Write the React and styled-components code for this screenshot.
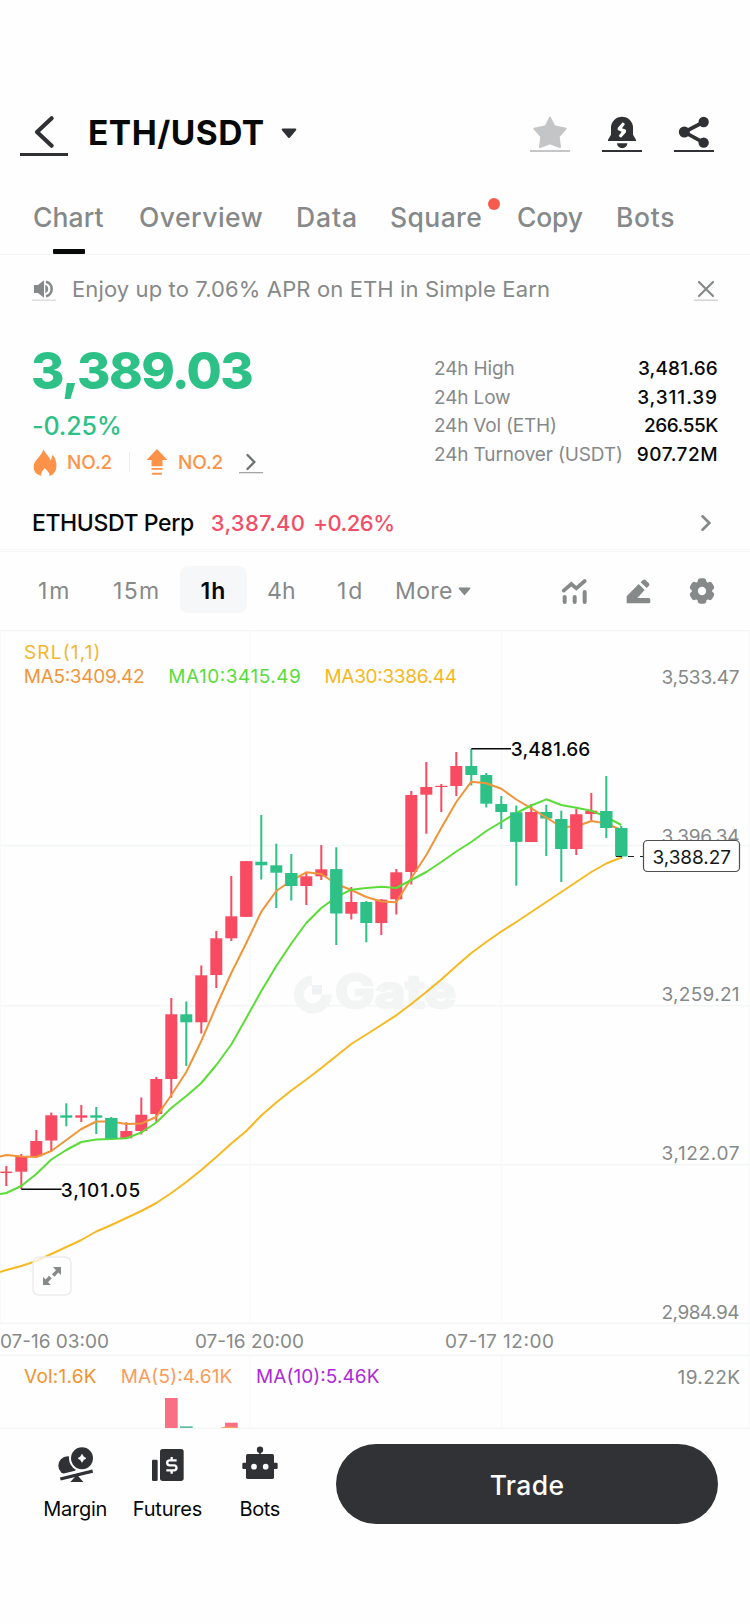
import React from "react";
import styled, { createGlobalStyle } from "styled-components";

const GlobalStyle = createGlobalStyle`
  * { box-sizing: border-box; }
  body { margin: 0; background: #fefefe; }
`;

const GREY = "#868989";
const DARK = "#2f3134";
const RED = "#f84b61";
const GREEN = "#2dc188";
const ORANGE = "#fd9248";

const Screen = styled.main`
  width: 750px;
  height: 1624px;
  padding-top: 88px;
  overflow: hidden;
  background: #fefefe;
  color: #070808;
  font-family: Inter, "Liberation Sans", sans-serif;
`;

const Text = styled.span`
  font-size: ${(p) => p.$size}px;
  font-weight: ${(p) => p.$weight || 400};
  letter-spacing: ${(p) => p.$track || 0}px;
  color: ${(p) => p.$color || "inherit"};
  white-space: nowrap;
`;

const Icon = styled.svg`
  display: block;
  flex: none;
  width: ${(p) => p.$w}px;
  height: ${(p) => p.$h}px;
`;

const Header = styled.header`
  height: 90px;
  padding: 0 36px 0 20px;
  display: flex;
  align-items: center;
`;

const PairName = styled.h1`
  margin: 0 16px 0 20px;
  font-size: 33.5px;
  font-weight: 700;
  letter-spacing: 0.5px;
  line-height: 40px;
`;

const HeaderActions = styled.div`
  margin-left: auto;
  display: flex;
  gap: 32px;
`;

const Tabs = styled.nav`
  height: 77px;
  padding-left: 33px;
  display: grid;
  grid-template-columns: 106px 157px 94px 127px 99px 80px;
  border-bottom: 1px solid #f3f4f4;
`;

const Tab = styled.div`
  position: relative;
  height: 76px;
  font-size: 26.5px;
  font-weight: 500;
  line-height: 78px;
  letter-spacing: ${(p) => p.$track}px;
  color: ${GREY};
  white-space: nowrap;
  ${(p) =>
    p.$active &&
    `&::after {
      content: "";
      position: absolute;
      left: 20px;
      bottom: 0;
      width: 32px;
      height: 5px;
      border-radius: 1px;
      background: #070808;
    }`}
`;

const Dot = styled.i`
  position: absolute;
  top: 20px;
  left: 98px;
  width: 12px;
  height: 12px;
  border-radius: 50%;
  background: #f75a4c;
`;

const Notice = styled.section`
  height: 68px;
  padding: 0 32px;
  display: flex;
  align-items: center;
  gap: 16px;
  color: ${GREY};
  & > :last-child { margin-left: auto; }
`;

const Summary = styled.section`
  height: 174px;
  padding: 20px 32px 0 31px;
  display: flex;
  justify-content: space-between;
`;

const Price = styled.div`
  font-size: 51px;
  font-weight: 800;
  letter-spacing: -1.62px;
  line-height: 56px;
  color: ${GREEN};
`;

const Change = styled.div`
  margin-top: 12px;
  padding-left: 1px;
  font-size: 25px;
  font-weight: 500;
  letter-spacing: -0.1px;
  line-height: 30px;
  color: ${GREEN};
`;

const Ranks = styled.div`
  margin: 7px 0 0 2px;
  height: 28px;
  display: flex;
  align-items: center;
`;

const RankLabel = styled.span`
  width: 47px;
  margin-left: 10px;
  font-size: 19px;
  font-weight: 500;
  letter-spacing: -0.1px;
  color: ${ORANGE};
`;

const RankDivider = styled.i`
  width: 1px;
  height: 20px;
  margin: 0 16px 0 15px;
  background: #ececec;
`;

const RankMore = styled.span`
  margin-left: 14px;
`;

const Stats = styled.dl`
  width: 284px;
  margin: 12px 0 0;
`;

const StatRow = styled.div`
  display: flex;
  justify-content: space-between;
  height: 28.67px;
  line-height: 28.67px;
`;

const PerpRow = styled.section`
  height: 52px;
  padding: 0 39px 0 32px;
  display: flex;
  align-items: center;
  & > :last-child { margin-left: auto; }
`;

const PerpPrice = styled(Text)`
  margin-left: 17px;
`;

const PerpChange = styled(Text)`
  margin-left: 8px;
`;

const Separator = styled.div`
  height: 3px;
  border: solid #f5f6f6;
  border-width: 1px 0;
`;

const Toolbar = styled.section`
  height: 78px;
  padding: 0 35px 0 38px;
  display: flex;
  align-items: center;
  font-size: 23px;
  color: ${GREY};
`;

const Interval = styled.span`
  width: ${(p) => p.$w}px;
  letter-spacing: ${(p) => p.$track || 0}px;
  line-height: 30px;
  white-space: nowrap;
`;

const ActiveInterval = styled.span`
  width: 67px;
  height: 47px;
  margin: -3px 20px 0 0;
  padding-top: 3px;
  border-radius: 8px;
  background: #f6f7f8;
  color: #070808;
  font-weight: 600;
  letter-spacing: 1px;
  line-height: 44px;
  text-align: center;
`;

const Tools = styled.div`
  margin-left: auto;
  display: flex;
  align-items: center;
  gap: 38.5px;
`;

const ChartSvg = styled.svg`
  display: block;
  width: 750px;
  height: 799px;
  font-family: Inter, "Liberation Sans", sans-serif;
  font-size: 19px;
`;

const BottomBar = styled.footer`
  height: 195px;
  padding: 15px 32px 0 29px;
  display: flex;
`;

const NavItem = styled.div`
  width: 92.3px;
  padding-top: 2px;
  display: flex;
  flex-direction: column;
  align-items: center;
  gap: 15px;
  line-height: 24px;
`;

const TradeButton = styled.button`
  width: 382px;
  height: 80px;
  margin-left: auto;
  padding: 1px 0 0;
  border: 0;
  border-radius: 40px;
  background: #303236;
  color: #fff;
  font: 500 26.5px Inter, "Liberation Sans", sans-serif;
  letter-spacing: 0.35px;
`;

function Chevron({ h = 16, w = 10 }) {
  return (
    <Icon $w={w} $h={h} viewBox="0 0 10 16">
      <path d="M1.5 1.3 8.3 8 1.5 14.7" fill="none" stroke={GREY} strokeWidth="2.6" strokeLinecap="round" />
    </Icon>
  );
}

function Caret({ w, h, color }) {
  return (
    <Icon $w={w} $h={h} viewBox="0 0 16 11">
      <path d="M1.7 1.5h12.6L8 9z" fill={color} stroke={color} strokeWidth="2" strokeLinejoin="round" />
    </Icon>
  );
}

/* body top and bottom, wick top and bottom, direction (1 = red) */
const candles = [
  [1171.6, 1173, 1166, 1186, 1], [1157, 1171.7, 1154, 1189, 1], [1141, 1156.3, 1130, 1156, 1],
  [1115.3, 1140.5, 1112.5, 1152, 1], [1115.3, 1117.7, 1103.3, 1126.3, 0], [1115.3, 1117.7, 1105, 1122, 1],
  [1115.3, 1117.7, 1107, 1134, 0], [1118, 1138.5, 1117, 1138, 0], [1131, 1138.3, 1122.3, 1138, 1],
  [1114.7, 1131, 1097.5, 1134.5, 1], [1079, 1114, 1077, 1121.7, 1], [1014.3, 1079, 998, 1097.7, 1],
  [1014.3, 1022.3, 1001.5, 1066, 0], [975.3, 1022.3, 965.5, 1033.5, 1], [938.3, 975, 931, 988, 1],
  [916.3, 938.3, 876, 941, 1], [861.3, 916.7, 862, 917, 1], [861.7, 865.3, 815, 879.5, 0],
  [865.3, 872.7, 843.7, 908, 0], [873, 886, 854, 900.5, 0], [876.3, 886, 872, 905, 1],
  [869.3, 876.3, 845, 880, 1], [869.3, 913.3, 847.3, 945, 0], [902, 913.7, 887, 919.5, 1],
  [902, 923, 901, 942.3, 0], [899.7, 923, 899, 935, 1], [872.3, 899.3, 869, 914.5, 1],
  [795, 872, 791, 884.5, 1], [787, 794.7, 762, 833.7, 1], [785.8, 787, 784, 812, 1],
  [766, 786, 752, 796, 1], [766, 775, 749, 785.5, 0], [775, 803.7, 773, 807.5, 0],
  [804, 812, 796, 829, 0], [812.5, 841.7, 805.5, 885.7, 0], [812, 842, 804, 841, 1],
  [812, 818.5, 804.7, 856, 0], [819, 849, 810.7, 882, 0], [814.5, 849, 808.7, 855, 1],
  [810.7, 814, 793, 820.5, 1], [811, 828, 776, 838, 0], [828, 856.3, 826, 859, 0],
];
const xAt = (k) => 6.3 + 15 * k;

const ma5 = [1155, 1156.5, 1157, 1151, 1140, 1129, 1121.5, 1121.5, 1124, 1123.5, 1117, 1095, 1072, 1041, 1006, 973, 943, 911.7, 891, 880.5, 872.3, 874, 884, 890, 897, 901.5, 902.3, 878, 855, 828, 802, 781.7, 783.3, 788.7, 799.5, 808.3, 817.5, 827, 826.5, 821, 823.5, 830];
const ma10 = [1193, 1186, 1174, 1159.5, 1150, 1142, 1139.5, 1139, 1138.3, 1132.5, 1122.5, 1108, 1096, 1083, 1065, 1044.5, 1018, 991, 966, 943.5, 923, 908, 897, 889.7, 888, 886.7, 888, 880, 872, 862, 851.5, 842, 831, 822, 813, 805.5, 799.3, 805, 807.7, 810.7, 817, 825];
const ma30 = [1270, 1266, 1261, 1254, 1247, 1240, 1231.5, 1225, 1218, 1211, 1203, 1193, 1182, 1170, 1157, 1143.5, 1131, 1115.5, 1102.5, 1090.5, 1079.5, 1068, 1056, 1044, 1034.5, 1025, 1015.3, 1004, 992, 979.5, 966, 953, 942, 931.5, 922, 912, 902, 892, 882, 872, 863.5, 857.5];
const linePath = (start, ys) => `M0 ${start}` + ys.map((y, k) => `L${xAt(k)} ${y}`).join("");

function Label({ x, y, w, children, fill = GREY, weight = 400 }) {
  return (
    <text x={x} y={y} fill={fill} fontWeight={weight} textLength={w} lengthAdjust="spacing">
      {children}
    </text>
  );
}

function PriceChart() {
  return (
    <ChartSvg viewBox="0 630 750 799">
      <g stroke="#f4f5f5" strokeWidth="1.4" fill="none">
        <path d="M0 630.7H750M0 845.5H750M0 1005.7H750M0 1164.7H750M0 1323.3H750M0 1355.3H750M0 1428.3H750" />
        <path d="M250 631V1323M501.5 631V1323M250 1355V1428M501.5 1355V1428M748.7 631V1428M.5 631V1323" stroke="#f8f9f9" />
      </g>

      <g fill="#f3f4f4">
        <path d="M312 975.5a19 19 0 1 0 20 19h-10.5a9 9 0 1 1-9.5-9z" />
        <path d="M312 985h10v9.5h-10z" fill="#eff2f2" />
        <text x="335" y="1008" fontSize="46" fontWeight="700" textLength="121" lengthAdjust="spacingAndGlyphs" stroke="#f3f4f4" strokeWidth="2.5">Gate</text>
      </g>

      <Label x="661.5" y="683.5" w="78">3,533.47</Label>
      <Label x="661.5" y="842.5" w="78">3,396.34</Label>
      <Label x="661.5" y="1001" w="78">3,259.21</Label>
      <Label x="661.5" y="1160" w="78">3,122.07</Label>
      <Label x="661.5" y="1319" w="78">2,984.94</Label>

      {candles.map(([top, bottom, high, low, up], k) => (
        <g key={k} fill={up ? RED : GREEN}>
          <rect x={xAt(k) - 6} y={top} width="12" height={bottom - top} />
          <rect x={xAt(k) - 1} y={high} width="2" height={low - high} />
        </g>
      ))}

      <g fill="none" strokeWidth="2" strokeLinejoin="round">
        <path d={linePath(1156.5, ma5)} stroke="#f0943a" />
        <path d={linePath(1194, ma10)} stroke="#5bdc38" />
        <path d={linePath(1272, ma30)} stroke="#f6b922" />
      </g>
      <g>
        {candles.map(([top, bottom, , , up], k) =>
          [7, 16, 19, 22, 34, 35, 37, 38, 40, 41].includes(k) ? (
            <rect key={k} x={xAt(k) - 6} y={top} width="12" height={bottom - top} fill={up ? RED : GREEN} />
          ) : null
        )}
      </g>

      <path d="M21.3 1189.3H61.5M471.3 748.8H511" stroke="#070808" strokeWidth="1.5" />
      <Label x="60.8" y="1196.5" w="79.5" fill="#070808" weight={500}>3,101.05</Label>
      <Label x="510.8" y="756" w="79.5" fill="#070808" weight={500}>3,481.66</Label>

      <path d="M616 856.5H643" stroke="#222" strokeWidth="1.2" strokeDasharray="6 6" />
      <rect x="643.5" y="840.5" width="96" height="31" rx="4" fill="#fff" stroke="#4c4e50" strokeWidth="1.2" />
      <Label x="652.5" y="864" w="78.5" fill="#161718">3,388.27</Label>

      <Label x="24" y="659" w="76.5" fill="#f3b730">SRL(1,1)</Label>
      <Label x="23.8" y="683" w="120.8" fill="#f0953c">MA5:3409.42</Label>
      <Label x="168.3" y="683" w="132.5" fill="#5bdb3c">MA10:3415.49</Label>
      <Label x="324.5" y="683" w="132.5" fill="#f5b822">MA30:3386.44</Label>

      <Label x="0" y="1347.5" w="109">07-16 03:00</Label>
      <Label x="195" y="1347.5" w="109">07-16 20:00</Label>
      <Label x="445" y="1347.5" w="109">07-17 12:00</Label>

      <Label x="24" y="1383.3" w="72.5" fill="#f0952d">Vol:1.6K</Label>
      <Label x="120.8" y="1383.3" w="111.5" fill="#fb9b5c">MA(5):4.61K</Label>
      <Label x="256" y="1383.3" w="123.5" fill="#ac2bd6">MA(10):5.46K</Label>
      <Label x="677.5" y="1384" w="62.5">19.22K</Label>

      <rect x="165" y="1398" width="12.7" height="30" fill="#f97085" />
      <rect x="180" y="1426.3" width="12.7" height="1.7" fill="#59bfa0" />
      <rect x="225" y="1422.7" width="12.7" height="5.3" fill="#f97085" />
      <path d="M220 1428l5-1.5 12 .5v1z" fill="#fb9b5c" />

      <rect x="33" y="1257" width="38" height="38" rx="6" fill="#fefefe" fillOpacity=".75" stroke="#ededed" strokeWidth="1.5" />
      <g fill={GREY}>
        <path d="M53 1267h8v8l-2.700-2.5-3.800 4.200-2.500-2.500 4-4z" />
        <path d="M51 1285h-8v-8l2.700 2.500 3.300-3.800 2.700 2.500-3.700 4z" />
      </g>
    </ChartSvg>
  );
}

const stats = [
  ["24h High", -0.15, "3,481.66", 0.17],
  ["24h Low", -0.15, "3,311.39", 0.9],
  ["24h Vol (ETH)", -0.2, "266.55K", -0.43],
  ["24h Turnover (USDT)", -0.14, "907.72M", 0.5],
];

export default function App() {
  return (
    <Screen>
      <GlobalStyle />
      <Header>
        <Icon $w={48} $h={46} viewBox="0 0 144 138">
          <path d="M95 25 51 66 95 107" fill="none" stroke={DARK} strokeWidth="12.5" strokeLinecap="round" strokeLinejoin="round" />
          <path d="M0 129h144v9H0z" fill={DARK} />
        </Icon>
        <PairName>ETH/USDT</PairName>
        <Caret w={16} h={11} color={DARK} />
        <HeaderActions>
          <Icon $w={40} $h={42} viewBox="0 0 120 126">
            <path d="M60 17 73 43 107 50 86 74 90 105 60 94 30 105 34 74 13 50 47 43z" fill="#c3c5c7" stroke="#c3c5c7" strokeWidth="6" strokeLinejoin="round" />
            <path d="M0 114h120v6H0z" fill="#c3c5c7" />
          </Icon>
          <Icon $w={40} $h={42} viewBox="0 0 120 126">
            <path d="M27 47a33 33 0 0 1 66 0V68l9 15v4H18v-4l9-15z" fill={DARK} />
            <path d="M45 94h31a15.5 15 0 0 1-31 0z" fill={DARK} />
            <path d="M62 31l7 5-9 13 12 4v8L57 77l-7-5 9-13-12-5v-6z" fill="#fefefe" />
            <path d="M0 114h120v6H0z" fill={DARK} />
          </Icon>
          <Icon $w={40} $h={42} viewBox="0 0 120 126">
            <path d="M89 30 31 60 89 92" fill="none" stroke={DARK} strokeWidth="11" />
            <circle cx="89" cy="30" r="15.5" fill={DARK} />
            <circle cx="31" cy="60" r="16.5" fill={DARK} />
            <circle cx="89" cy="92" r="15.5" fill={DARK} />
            <path d="M0 114h120v6H0z" fill={DARK} />
          </Icon>
        </HeaderActions>
      </Header>

      <Tabs>
        <Tab $track={0.1} $active>Chart</Tab>
        <Tab $track={0.48}>Overview</Tab>
        <Tab $track={0.9}>Data</Tab>
        <Tab $track={0.4}>Square<Dot /></Tab>
        <Tab $track={-0.2}>Copy</Tab>
        <Tab $track={0.7}>Bots</Tab>
      </Tabs>

      <Notice>
        <Icon $w={24} $h={24} viewBox="0 0 24 24">
          <path d="M2 8h4L12 3.300v17.400L6 16H2z" fill={GREY} />
          <path d="M13.300 8a4.200 4.200 0 0 1 0 8z" fill={GREY} />
          <path d="M14 4.800a7.400 7.400 0 0 1 0 14.400" fill="none" stroke={GREY} strokeWidth="2.600" />
          <path d="M0 23.200h24" stroke="#dcdddd" strokeWidth="1.500" />
        </Icon>
        <Text $size={22} $track={0.12}>Enjoy up to 7.06% APR on ETH in Simple Earn</Text>
        <Icon $w={24} $h={24} viewBox="0 0 24 24">
          <path d="M5 5 19 19M19 5 5 19" stroke={GREY} strokeWidth="2.200" strokeLinecap="round" />
          <path d="M0 23.200h24" stroke="#d2d3d3" strokeWidth="1.500" />
        </Icon>
      </Notice>

      <Summary>
        <div>
          <Price>3,389.03</Price>
          <Change>-0.25%</Change>
          <Ranks>
            <Icon $w={24} $h={27} viewBox="0 0 72 81">
              <path d="M31 1C35 12 48 20 53 35L59 17C68 28 72 42 70 56 68 69 60 79 49 80 51 72 42 64 35 58 29 64 23 72 25 80 10 77 2 67 2 53 2 34 25 24 31 1Z" fill={ORANGE} />
            </Icon>
            <RankLabel>NO.2</RankLabel>
            <RankDivider />
            <Icon $w={22} $h={26} viewBox="0 0 63 78">
              <path d="M31.500 0 63 33H48V52H15V33H0ZM15 57h33v5H15zM17 71h29v6H17z" fill={ORANGE} />
            </Icon>
            <RankLabel>NO.2</RankLabel>
            <RankMore>
              <Icon $w={24} $h={24} viewBox="0 0 24 24">
                <path d="M8.500 5 15.300 12 8.500 19" fill="none" stroke="#6f7273" strokeWidth="2.400" strokeLinecap="round" />
                <path d="M0 22.700h24" stroke="#9b9d9d" strokeWidth="1.200" />
              </Icon>
            </RankMore>
          </Ranks>
        </div>
        <Stats>
          {stats.map(([name, t1, value, t2]) => (
            <StatRow key={name}>
              <Text $size={19} $track={t1} $color={GREY}>{name}</Text>
              <Text $size={19} $weight={500} $track={t2}>{value}</Text>
            </StatRow>
          ))}
        </Stats>
      </Summary>

      <PerpRow>
        <Text $size={23} $weight={500} $track={-0.39}>ETHUSDT Perp</Text>
        <PerpPrice $size={22} $weight={500} $track={0.29} $color="#f04f68">3,387.40</PerpPrice>
        <PerpChange $size={22} $weight={500} $track={-0.5} $color="#f04f68">+0.26%</PerpChange>
        <Chevron />
      </PerpRow>
      <Separator />

      <Toolbar>
        <Interval $w={75} $track={2}>1m</Interval>
        <Interval $w={67} $track={1.3}>15m</Interval>
        <ActiveInterval>1h</ActiveInterval>
        <Interval $w={70} $track={0.2}>4h</Interval>
        <Interval $w={58} $track={1.8}>1d</Interval>
        <Interval $w={63} $track={0.4}>More</Interval>
        <Caret w={13} h={9} color={GREY} />
        <Tools>
          <Icon $w={25} $h={25} viewBox="0 0 75 75">
            <path d="M5 35 28 15 43 28 68 6" fill="none" stroke={GREY} strokeWidth="11" strokeLinecap="round" strokeLinejoin="miter" />
            <path d="M8 54V69M38 54V69M68 39V69" stroke={GREY} strokeWidth="12" strokeLinecap="round" />
          </Icon>
          <Icon $w={25} $h={25} viewBox="0 0 75 75">
            <path d="M2 52 38 15 56 33 34 57H68a5 5 0 0 1 5 5v6a5 5 0 0 1-5 5H2z" fill={GREY} />
            <path d="M44 10 51 3q4-3 8 1l9 8q4 4 1 8l-7 7z" fill={GREY} />
          </Icon>
          <Icon $w={26} $h={26} viewBox="-39 -39 78 78">
            <circle r="31" fill={GREY} />
            {[0, 60, 120, 180, 240, 300].map((a) => (
              <rect key={a} x="-13" y="-38" width="26" height="22" rx="9" fill={GREY} transform={`rotate(${a})`} />
            ))}
            <circle r="12.500" fill="#fefefe" />
          </Icon>
        </Tools>
      </Toolbar>

      <PriceChart />

      <BottomBar>
        <NavItem>
          <Icon $w={36} $h={36} viewBox="0 0 108 108">
            <circle cx="32" cy="59" r="28" fill={DARK} />
            <circle cx="75" cy="37" r="39" fill="#fefefe" />
            <path d="M10 92 107 68" stroke="#fefefe" strokeWidth="14" />
            <circle cx="75" cy="37" r="33" fill={DARK} />
            <path d="M75 25q3 9 12 12-9 3-12 12-3-9-12-12 9-3 12-12z" fill="#fefefe" stroke="#fefefe" strokeWidth="2" />
            <path d="M10 99 107 75" stroke={DARK} strokeWidth="10" />
            <path d="M60 86 80 109H39z" fill={DARK} />
          </Icon>
          <Text $size={20} $track={-0.3}>Margin</Text>
        </NavItem>
        <NavItem>
          <Icon $w={36} $h={36} viewBox="0 0 108 108">
            <rect x="9" y="41" width="17" height="64" rx="4" fill={DARK} />
            <rect x="33" y="9" width="71" height="96" rx="8" fill={DARK} />
            <path d="M83 43H62a7.500 7.500 0 0 0 0 15H75a7.500 7.500 0 0 1 0 15H52M68 33V43M68 73V83" fill="none" stroke="#fefefe" strokeWidth="7" />
          </Icon>
          <Text $size={20} $track={-0.2}>Futures</Text>
        </NavItem>
        <NavItem>
          <Icon $w={36} $h={36} viewBox="0 0 108 108">
            <circle cx="54" cy="11" r="9.500" fill={DARK} />
            <path d="M51.500 15h5v12h-5z" fill={DARK} />
            <rect x="12" y="24" width="84" height="75" rx="5" fill={DARK} />
            <rect x="1" y="50" width="106" height="19" rx="4" fill={DARK} />
            <circle cx="36" cy="62" r="8.500" fill="#fefefe" />
            <circle cx="71" cy="62" r="8.500" fill="#fefefe" />
          </Icon>
          <Text $size={20} $track={-0.4}>Bots</Text>
        </NavItem>
        <TradeButton>Trade</TradeButton>
      </BottomBar>
    </Screen>
  );
}
